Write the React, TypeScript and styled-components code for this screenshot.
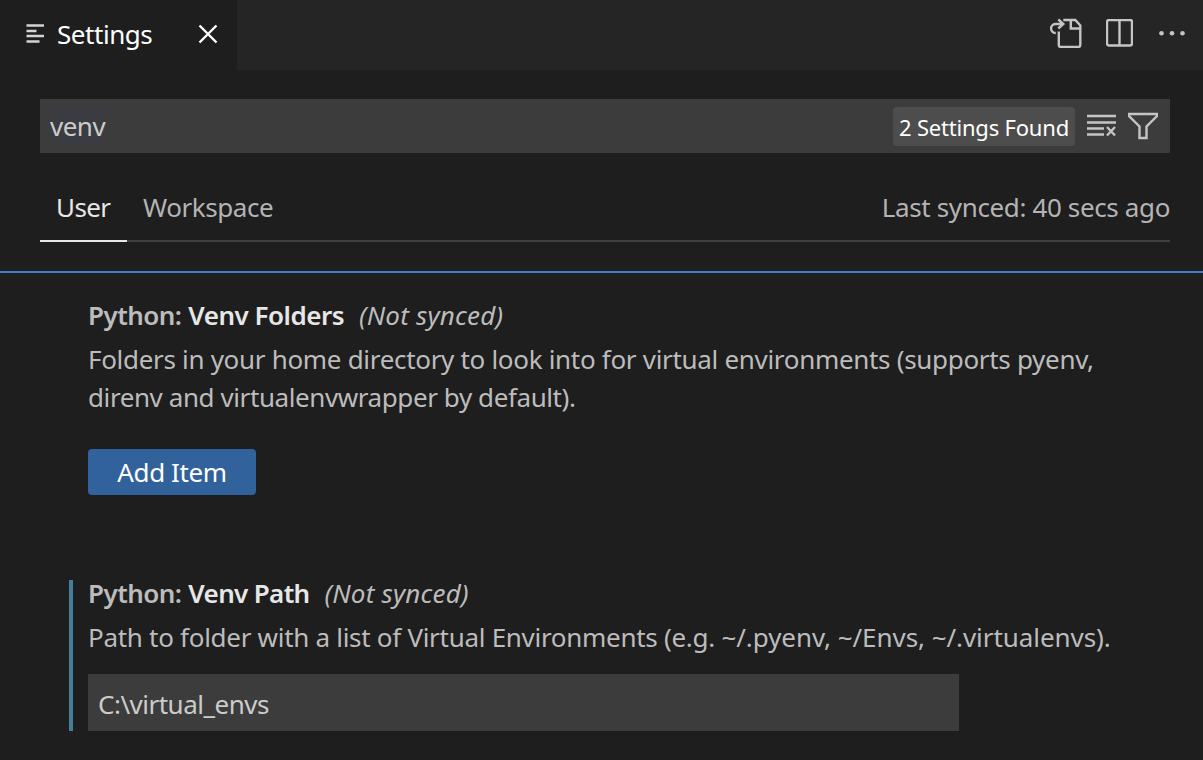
import React from "react";
import styled, { createGlobalStyle } from "styled-components";

const Global = createGlobalStyle`
  * { box-sizing: border-box; }
  html, body { margin: 0; background: #1e1e1e; }
  body { font-family: "Noto Sans", "Open Sans", sans-serif; font-size: 26px; line-height: 38px; color: #bcbcbc; overflow: hidden; }
`;

const Window = styled.main`
  display: flex;
  flex-direction: column;
  height: 760px;
  background: #1e1e1e;
`;

const Text = styled.span<{ $spacing?: number }>`
  white-space: nowrap;
  letter-spacing: ${(p) => p.$spacing ?? -0.45}px;
`;

const TabBar = styled.header`
  display: flex;
  justify-content: space-between;
  flex: none;
  height: 70px;
  background: #252526;
`;

const EditorTab = styled.div`
  display: flex;
  align-items: center;
  width: 237px;
  padding: 0 0 3px 26px;
  background: #1e1e1e;
  color: #ffffff;
`;

const TabTitle = styled(Text)`
  width: 140px;
  margin-left: 12px;
`;

const Actions = styled.div`
  display: flex;
  align-items: center;
  gap: 22px;
  padding: 0 17px 4px 0;
  color: #c5c5c5;
`;

const Icon = styled.svg`
  display: block;
  flex: none;
  fill: none;
  stroke: currentColor;
  stroke-width: 2.4;
`;

const MoreIcon = styled(Icon)`
  margin-left: 3px;
  fill: currentColor;
  stroke: none;
`;

const SearchBox = styled.div`
  display: flex;
  align-items: center;
  flex: none;
  height: 54px;
  margin: 29px 33px 0 40px;
  padding: 0 12px 0 10px;
  background: #3c3c3c;
  color: #cccccc;
`;

const Query = styled.div`
  flex: 1;
`;

const SelectedQuery = styled(Text)`
  display: block;
  width: fit-content;
  line-height: 40px;
  background: #3a3c41;
`;

const CountBadge = styled.div`
  display: flex;
  justify-content: center;
  align-items: center;
  width: 182px;
  height: 39px;
  margin-right: 12px;
  padding-top: 2px;
  border-radius: 4px;
  background: #4d4d4d;
  color: #ffffff;
  font-size: 22px;
`;

const SearchIcons = styled.div`
  display: flex;
  gap: 11px;
  color: #c5c5c5;
`;

const ScopeBar = styled.nav`
  display: flex;
  flex: none;
  height: 60px;
  margin: 29px 33px 0 40px;
  padding-top: 6px;
  box-shadow: inset 0 -2px #404040;
`;

const Scope = styled.div<{ $active?: boolean }>`
  width: ${(p) => (p.$active ? "87px" : "auto")};
  padding-left: 16px;
  color: ${(p) => (p.$active ? "#e7e7e7" : "#b4b4b4")};
  border-bottom: 2px solid ${(p) => (p.$active ? "#e7e7e7" : "transparent")};
`;

const SyncStatus = styled.div`
  margin-left: auto;
  color: #b4b4b4;
`;

const SettingsList = styled.section`
  flex: 1;
  margin-top: 29px;
  padding-top: 29px;
  border-top: 2px solid #3f7cd3;
`;

const Setting = styled.article<{ $modified?: boolean }>`
  margin-left: 69px;
  padding-left: 15px;
  border-left: 4px solid ${(p) => (p.$modified ? "#457e9d" : "transparent")};
  & + & { margin-top: 85px; }
`;

const Title = styled.h2`
  display: flex;
  height: 38px;
  margin: 0;
  font-size: 26px;
  font-weight: 600;
  line-height: 26px;
`;

const Key = styled(Text)`
  color: #e7e7e7;
  margin-left: 7px;
`;

const Note = styled(Text)`
  margin-left: 15px;
  font-weight: 400;
  font-style: italic;
`;

const Description = styled.p`
  display: flex;
  flex-direction: column;
  margin: 0;
`;

const AddButton = styled.button`
  display: block;
  width: 168px;
  height: 46px;
  margin-top: 33px;
  padding: 0;
  border: 0;
  border-radius: 4px;
  background: #32629c;
  color: #ffffff;
  font: inherit;
`;

const PathField = styled.div`
  display: flex;
  align-items: center;
  width: 871px;
  height: 57px;
  margin-top: 18px;
  padding: 3px 10px 0;
  background: #3c3c3c;
  color: #cccccc;
`;

export default function App() {
  return (
    <Window>
      <Global />
      <TabBar>
        <EditorTab>
          <Icon width="19" height="20" viewBox="0 0 19 20">
            <path d="M0.500 1.500h17.500M0.500 7h10M0.500 12h17.500M0.500 17.500h13" stroke="#d4d4d4" />
          </Icon>
          <TabTitle>Settings</TabTitle>
          <Icon width="22" height="20" viewBox="0 0 22 20">
            <path d="M2.500 1.500l17 17M19.500 1.500l-17 17" />
          </Icon>
        </EditorTab>
        <Actions>
          <Icon width="34" height="30" viewBox="0.7 0 34 30">
            <path d="M14 2h12l5 5.500v19.500q0 2-2 2H11.500q-2 0-2-2V13.500M21.500 2v8.500H31" />
            <path d="M9 1.500l5 4.500-5 4.500M14 6H6a4.500 4.500 0 0 0 0.500 9" />
          </Icon>
          <Icon width="27" height="28" viewBox="0 0 27 28">
            <rect x="1" y="1" width="25" height="25.500" rx="2" />
            <path d="M13.500 1v26" />
          </Icon>
          <MoreIcon width="28" height="6" viewBox="0 0 28 6">
            <circle cx="3.500" cy="3.300" r="2.300" />
            <circle cx="14" cy="3.300" r="2.300" />
            <circle cx="24.500" cy="3.300" r="2.300" />
          </MoreIcon>
        </Actions>
      </TabBar>

      <SearchBox>
        <Query><SelectedQuery $spacing={-0.5}>venv</SelectedQuery></Query>
        <CountBadge><Text $spacing={-0.2}>2 Settings Found</Text></CountBadge>
        <SearchIcons>
          <Icon width="30" height="28" viewBox="0 0 30 28">
            <path d="M0 4h29M0 10.500h29M0 16.500h17M0 22.500h17M20 15l8 8.500M28 15l-8 8.500" />
          </Icon>
          <Icon width="30" height="28" viewBox="0 0 30 28">
            <path d="M1 2h28v2L18.500 14.500v11.500h-7V14.500L1 4z" />
          </Icon>
        </SearchIcons>
      </SearchBox>

      <ScopeBar>
        <Scope $active><Text $spacing={-0.6}>User</Text></Scope>
        <Scope><Text>Workspace</Text></Scope>
        <SyncStatus><Text $spacing={-0.37}>Last synced: 40 secs ago</Text></SyncStatus>
      </ScopeBar>

      <SettingsList>
        <Setting>
          <Title>
            <Text $spacing={-0.55}>Python:</Text>
            <Key $spacing={-0.5}>Venv Folders</Key>
            <Note $spacing={0.2}>(Not synced)</Note>
          </Title>
          <Description>
            <Text $spacing={-0.31}>Folders in your home directory to look into for virtual environments (supports pyenv,</Text>
            <Text $spacing={-0.41}>direnv and virtualenvwrapper by default).</Text>
          </Description>
          <AddButton><Text $spacing={-0.4}>Add Item</Text></AddButton>
        </Setting>
        <Setting $modified>
          <Title>
            <Text $spacing={-0.55}>Python:</Text>
            <Key $spacing={-0.65}>Venv Path</Key>
            <Note $spacing={0.2}>(Not synced)</Note>
          </Title>
          <Description>
            <Text $spacing={-0.29}>
              Path to folder with a list of Virtual Environments (e.g.{" "}
              <Text $spacing={-0.06}>~/.pyenv, ~/Envs, ~/.virtualenvs).</Text>
            </Text>
          </Description>
          <PathField><Text $spacing={-0.5}>C:\virtual_envs</Text></PathField>
        </Setting>
      </SettingsList>
    </Window>
  );
}
